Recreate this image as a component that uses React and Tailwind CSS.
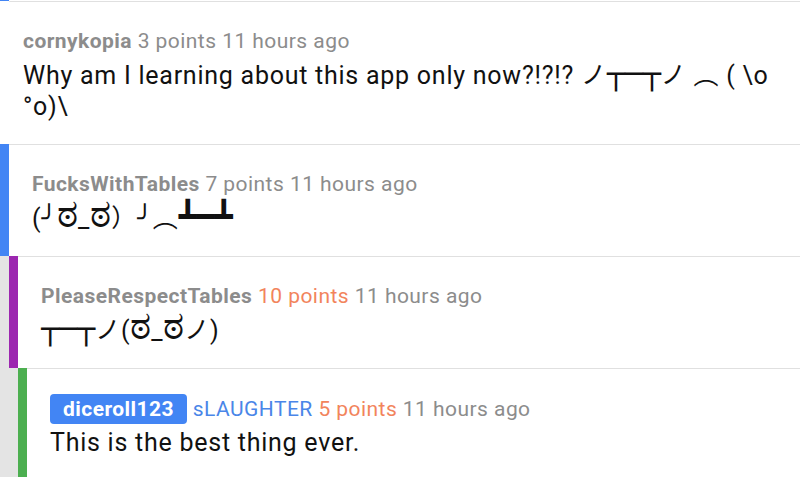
import React from 'react';

// box drawing and kannada glyphs come out small in the fallback fonts, so bump them
const Box = ({ children }) => (
  <span className="text-[30px] leading-[0] tracking-normal">{children}</span>
);
const Eye = () => (
  <span className="text-[40px] leading-[0] tracking-normal">ಠ</span>
);

const comments = [
  {
    depth: 0,
    user: 'cornykopia',
    points: '3 points',
    time: '11 hours ago',
    body: (
      <>
        Why am I learning about this app only now?!?!? ノ<Box>┬─┬</Box>ノ ︵ ( \o
        <br />
        °o)\
      </>
    ),
  },
  {
    depth: 1,
    user: 'FucksWithTables',
    points: '7 points',
    time: '11 hours ago',
    body: (
      <>
        (╯<Eye />_<Eye />）╯︵<Box>┻━┻</Box>
      </>
    ),
  },
  {
    depth: 2,
    user: 'PleaseRespectTables',
    points: '10 points',
    hot: true,
    time: '11 hours ago',
    body: (
      <>
        <Box>┬─┬</Box>ノ(<Eye />_<Eye />ノ)
      </>
    ),
  },
  {
    depth: 3,
    user: 'diceroll123',
    op: true,
    flair: 'sLAUGHTER',
    points: '5 points',
    hot: true,
    time: '11 hours ago',
    body: 'This is the best thing ever.',
  },
];

const barColors = ['', 'bg-[#4285f4]', 'bg-[#9c27b0]', 'bg-[#4caf50]'];

function Comment({ c }) {
  return (
    <div className="flex">
      {Array.from({ length: Math.max(c.depth - 1, 0) }).map((_, i) => (
        <div key={i} className="w-[9px] shrink-0 bg-[#e4e4e4]" />
      ))}
      {c.depth > 0 ? (
        <div className={`w-[9px] shrink-0 ${barColors[c.depth]}`} />
      ) : (
        <div className="w-[9px] shrink-0 bg-white" />
      )}
      <div
        className={`flex-1 border-t border-[#e0e0e0] pt-[25px] pb-[22px] ${
          c.depth > 0 ? 'pl-[23px]' : 'pl-[14px]'
        }`}
      >
        <div className="h-[28px] text-[21px] leading-[28px] tracking-[0.45px] text-[#8c8c8c] whitespace-nowrap">
          {c.op ? (
            <span className="inline-block rounded-[4px] bg-[#4285f4] px-[13px] py-px leading-[28px] font-bold text-white">
              {c.user}
            </span>
          ) : (
            <span className="font-bold">{c.user}</span>
          )}{' '}
          {c.flair && <span className="text-[#4a86e8]">{c.flair} </span>}
          <span className={c.hot ? 'text-[#f2845c]' : ''}>{c.points}</span>{' '}
          {c.time}
        </div>
        <div className="mt-[5px] text-[25px] leading-[31px] tracking-[0.75px] text-[#111]">
          {c.body}
        </div>
      </div>
    </div>
  );
}

export default function App() {
  return (
    <div
      className="w-[800px] h-[477px] overflow-hidden bg-white"
      style={{ fontFamily: "Roboto, 'DejaVu Sans', 'Noto Sans CJK JP', sans-serif" }}
    >
      <div className="flex h-px">
        <div className="w-[9px] bg-[#4285f4]" />
      </div>
      {comments.map((c) => (
        <Comment key={c.user} c={c} />
      ))}
    </div>
  );
}
